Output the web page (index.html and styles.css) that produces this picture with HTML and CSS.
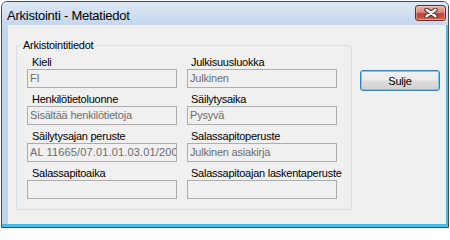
FILE: index.html
```html
<!DOCTYPE html>
<html lang="fi">
<head>
<meta charset="utf-8">
<title>Arkistointi - Metatiedot</title>
<link rel="stylesheet" href="styles.css">
</head>
<body>
<div class="window">
  <div class="titlebar">
    <span class="title">Arkistointi - Metatiedot</span>
    <button class="close" aria-label="Sulje ikkuna">
      <svg width="14" height="10" viewBox="0 0 14 10">
        <path d="M2.5 1.8 L11.5 8.2 M11.5 1.8 L2.5 8.2" stroke="#4a2320" stroke-width="4.4" stroke-linecap="round" fill="none"/>
        <path d="M2.5 1.8 L11.5 8.2 M11.5 1.8 L2.5 8.2" stroke="#ffffff" stroke-width="2.5" stroke-linecap="round" fill="none"/>
      </svg>
    </button>
  </div>
  <div class="frame">
    <div class="client">
      <fieldset class="group">
        <legend class="legend">Arkistointitiedot</legend>
        <div class="fields">
          <div class="field"><div class="label">Kieli</div><div class="box">FI</div></div>
          <div class="field"><div class="label">Julkisuusluokka</div><div class="box">Julkinen</div></div>
          <div class="field"><div class="label">Henkilötietoluonne</div><div class="box">Sisältää henkilötietoja</div></div>
          <div class="field"><div class="label">Säilytysaika</div><div class="box">Pysyvä</div></div>
          <div class="field"><div class="label">Säilytysajan peruste</div><div class="box box-code">AL 11665/07.01.01.03.01/2006</div></div>
          <div class="field"><div class="label">Salassapitoperuste</div><div class="box">Julkinen asiakirja</div></div>
          <div class="field"><div class="label">Salassapitoaika</div><div class="box"></div></div>
          <div class="field"><div class="label">Salassapitoajan laskentaperuste</div><div class="box"></div></div>
        </div>
      </fieldset>
      <button class="btn">Sulje</button>
    </div>
  </div>
</div>
</body>
</html>
```

FILE: styles.css
```css
html, body {
  margin: 0;
  padding: 0;
  background: #ffffff;
}

body {
  font-family: "Liberation Sans", Arial, sans-serif;
}

.window {
  box-sizing: border-box;
  margin: 1px 0 0 1px;
  width: 448px;
  height: 227px;
  border: 1px solid #434a55;
  border-radius: 6px 6px 0 0;
  background: linear-gradient(#dae5f3, #c3d5eb 30px, #c3d5eb);
  display: flex;
  flex-direction: column;
  overflow: hidden;
}

.titlebar {
  height: 23px;
  display: flex;
  align-items: flex-start;
  padding: 0 2px 0 5px;
  background: linear-gradient(#dde8f5, #c5d7ec);
}

.title {
  margin-top: 6px;
  font-size: 13px;
  line-height: 15px;
  letter-spacing: -0.25px;
  color: #000000;
}

.close {
  margin: 3px 0 0 auto;
  box-sizing: border-box;
  width: 31px;
  height: 16px;
  padding: 0;
  border: 1px solid #6e2b25;
  border-radius: 3px;
  background: linear-gradient(#eab0a6 0%, #d98a7d 45%, #c5493a 52%, #c24a3c 78%, #d7735f 100%);
  box-shadow: inset 0 0 0 1px rgba(255, 220, 210, 0.45);
  display: flex;
  align-items: center;
  justify-content: center;
}

.frame {
  flex: 1;
  display: flex;
  padding-left: 6px;
  border-bottom: 3px solid #45bdea;
}

.client {
  flex: 1;
  display: flex;
  align-items: flex-start;
  padding: 14px 0 0 8px;
  background: #f0f0f0;
  border-right: 2px solid #45bdea;
}

.group {
  box-sizing: border-box;
  margin: 0;
  width: 336px;
  border: 1px solid #d5dfe5;
  border-radius: 3px;
  padding: 4px 0 10px 4px;
}

.legend {
  padding: 0 2px;
  font-size: 11px;
  line-height: 13px;
  letter-spacing: -0.25px;
  color: #000000;
}

.fields {
  margin-left: 6px;
  display: grid;
  grid-template-columns: 150px 150px;
  column-gap: 10px;
  row-gap: 5px;
}

.field {
  display: flex;
  flex-direction: column;
}

.label {
  margin-left: 5px;
  height: 13px;
  font-size: 11px;
  line-height: 13px;
  letter-spacing: -0.25px;
  color: #000000;
  white-space: nowrap;
}

.field:nth-child(even) .label {
  margin-left: 4px;
}

.box {
  box-sizing: border-box;
  height: 19px;
  border: 1px solid #adadad;
  background: #f0f0f0;
  padding: 0 2px;
  font-size: 11px;
  line-height: 17px;
  letter-spacing: -0.2px;
  color: #6d6d6d;
  white-space: nowrap;
  overflow: hidden;
}

.box-code {
  letter-spacing: 0.15px;
}

.btn {
  box-sizing: border-box;
  margin: 31px 0 0 8px;
  width: 80px;
  height: 21px;
  padding: 0;
  border: 1px solid #3c7fb1;
  border-radius: 3px;
  background: linear-gradient(#f2f2f2 0%, #ebebeb 48%, #dddddd 52%, #cfcfcf 100%);
  box-shadow: inset 0 0 0 1px #5fd3f7;
  font-family: "Liberation Sans", Arial, sans-serif;
  font-size: 11px;
  letter-spacing: -0.2px;
  color: #000000;
}
```
